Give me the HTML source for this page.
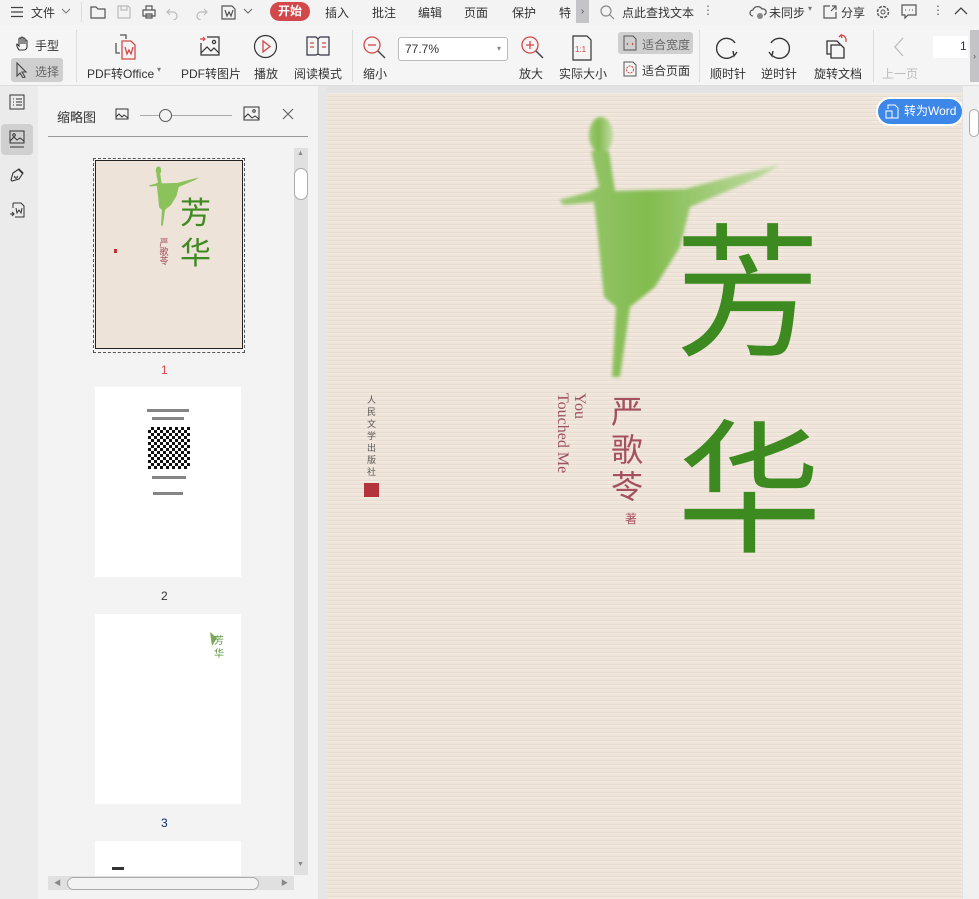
<!DOCTYPE html>
<html><head><meta charset="utf-8"><style>
*{margin:0;padding:0;box-sizing:border-box}
body{width:979px;height:899px;overflow:hidden;background:#e3e3e3;font-family:"Liberation Sans","Noto Sans CJK SC",sans-serif;font-size:12px;color:#333;position:relative}
.a{position:absolute}
#top{left:0;top:0;width:979px;height:25px;background:#f3f3f3}
#tb{left:0;top:25px;width:979px;height:61px;background:#f5f5f5;border-bottom:1px solid #ddd}
.t{position:absolute;white-space:nowrap;font-size:12px;color:#333}
.sep{position:absolute;width:1px;background:#dcdcdc}
#strip{left:0;top:86px;width:38px;height:813px;background:#ebebeb}
#panel{left:38px;top:86px;width:280px;height:813px;background:#f3f3f3}
#gap{left:318px;top:86px;width:9px;height:813px;background:#e6e6e6}
#page{left:327px;top:93px;width:635px;height:806px;background:#efe4d9;overflow:hidden;
background-image:repeating-linear-gradient(180deg,rgba(255,255,255,.25) 0 1px,rgba(0,0,0,0) 1px 3px,rgba(180,160,140,.12) 3px 4px)}
#rs{left:963px;top:86px;width:16px;height:813px;background:#f0f0f0}
</style></head><body>
<div id="top" class="a">
 <svg class="a" style="left:10px;top:6px" width="14" height="12"><path d="M1 1.5h12M1 6h12M1 10.5h12" stroke="#444" stroke-width="1.3"/></svg>
 <span class="t" style="left:31px;top:4px">文件</span>
 <svg class="a" style="left:61px;top:8px" width="10" height="7"><path d="M1 1l4 4 4-4" stroke="#777" fill="none"/></svg>
 <div class="sep" style="left:81px;top:2px;height:20px"></div>
 <svg class="a" style="left:90px;top:4px" width="160" height="16" fill="none" stroke="#555" stroke-width="1.2">
  <path d="M1 3h5l2 2h7v9H1z"/><path d="M28 2h10l2 2v10H28zM31 2v4h6V2" stroke="#bbb"/>
  <path d="M53 6h12v6H53zM56 6V2h6v4M56 10h6v4h-6z"/><path d="M80 5l-3 3 3 3M77 8h6a4 4 0 010 8" stroke="#bbb"/>
  <path d="M114 5l3 3-3 3M117 8h-6a4 4 0 000 8" stroke="#bbb"/><path d="M132 2h10l3 3v10h-13zM135 6l2 6 2-4 2 4 2-6"/>
 </svg>
 <svg class="a" style="left:243px;top:8px" width="10" height="7"><path d="M1 1l4 4 4-4" stroke="#666" fill="none"/></svg>
 <div class="a" style="left:270px;top:2px;width:40px;height:19px;background:#d2484a;border-radius:10px;color:#fff;font-size:12px;text-align:center;line-height:19px;font-weight:bold">开始</div>
 <span class="t" style="left:325px;top:4px">插入</span><span class="t" style="left:372px;top:4px">批注</span>
 <span class="t" style="left:418px;top:4px">编辑</span><span class="t" style="left:464px;top:4px">页面</span>
 <span class="t" style="left:512px;top:4px">保护</span><span class="t" style="left:559px;top:4px">特</span>
 <div class="a" style="left:576px;top:0;width:13px;height:23px;background:#c4c4c8;color:#555;font-size:10px;text-align:center;line-height:23px">›</div>
 <svg class="a" style="left:600px;top:5px" width="15" height="15"><circle cx="6" cy="6" r="5" stroke="#888" fill="none" stroke-width="1.2"/><path d="M10 10l4 4" stroke="#888" stroke-width="1.2"/></svg>
 <span class="t" style="left:622px;top:4px">点此查找文本</span><span class="t" style="left:702px;top:3px;color:#666">⋮</span>
 <svg class="a" style="left:749px;top:4px" width="18" height="16"><path d="M4 12a3 3 0 010-6 5 5 0 019-1 3 3 0 012 6" stroke="#555" fill="none" stroke-width="1.2"/><circle cx="11" cy="12" r="3" fill="#888"/></svg>
 <span class="t" style="left:769px;top:4px">未同步</span><span class="t" style="left:808px;top:4px;font-size:8px;color:#777">▾</span>
 <svg class="a" style="left:822px;top:4px" width="16" height="16"><path d="M8 2H2v12h12V8M9 7l5-5M10 2h4v4" stroke="#555" fill="none" stroke-width="1.2"/></svg>
 <span class="t" style="left:841px;top:4px">分享</span>
 <svg class="a" style="left:875px;top:4px" width="16" height="16"><circle cx="8" cy="8" r="5.5" stroke="#555" fill="none" stroke-width="1.5" stroke-dasharray="3 1.3"/><circle cx="8" cy="8" r="2" stroke="#555" fill="none"/></svg>
 <svg class="a" style="left:901px;top:4px" width="16" height="15"><path d="M1 1h14v10H7l-3 3v-3H1z" stroke="#555" fill="none" stroke-width="1.2"/><path d="M4 6h1M8 6h1M11 6h1" stroke="#555"/></svg>
 <span class="t" style="left:932px;top:3px;color:#555">⋮</span>
 <svg class="a" style="left:954px;top:7px" width="14" height="8"><path d="M1 7l6-6 6 6" stroke="#444" fill="none" stroke-width="1.3"/></svg>
</div>
<div id="tb" class="a">
 <svg class="a" style="left:15px;top:11px" width="16" height="16"><path d="M4 14c-2-3-3-5-2-6l2 2V3a1 1 0 012 0V8V2a1 1 0 012 0v6V3a1 1 0 012 0v5V5a1 1 0 012 0v6c0 2-2 3-3 3z" stroke="#333" fill="none" stroke-width="1.1"/></svg>
 <span class="t" style="left:35px;top:12px">手型</span>
 <div class="a" style="left:11px;top:33px;width:52px;height:24px;background:#cfcfcf;border-radius:3px"></div>
 <svg class="a" style="left:16px;top:37px" width="12" height="16"><path d="M1 1v13l3-3 3 5 2-1-3-5h4z" stroke="#444" fill="none" stroke-width="1.1"/></svg>
 <span class="t" style="left:35px;top:38px;color:#666">选择</span>
 <div class="sep" style="left:76px;top:5px;height:52px"></div>
 <svg class="a" style="left:112px;top:8px" width="26" height="28" fill="none" stroke-width="1.3"><path d="M8 2h6v4" stroke="#555"/><path d="M4 10v10h4" stroke="#555"/><path d="M10 8h9l4 4v14H10z" stroke="#d2484a"/><path d="M13 14l2 7 2-4 2 4 2-7" stroke="#d2484a"/></svg>
 <span class="t" style="left:87px;top:40px">PDF转Office</span><span class="t" style="left:157px;top:40px;font-size:8px;color:#777">▾</span>
 <svg class="a" style="left:198px;top:9px" width="24" height="24" fill="none" stroke="#333" stroke-width="1.2"><path d="M2 5h5M5 3l2 2-2 2" stroke="#d2484a"/><path d="M9 3h12v18H3V9"/><path d="M3 19l6-6 4 4 3-3 5 5"/><circle cx="16" cy="8" r="1.6"/></svg>
 <span class="t" style="left:181px;top:40px">PDF转图片</span>
 <svg class="a" style="left:253px;top:9px" width="25" height="25"><circle cx="12.5" cy="12.5" r="11" stroke="#333" fill="none" stroke-width="1.2"/><path d="M10 7l7 5.5-7 5.5z" stroke="#d2484a" fill="none" stroke-width="1.3"/></svg>
 <span class="t" style="left:254px;top:40px">播放</span>
 <svg class="a" style="left:306px;top:11px" width="24" height="20" fill="none" stroke="#334" stroke-width="1.2"><path d="M1 1h9l2 2 2-2h9v18h-9l-2-1-2 1H1zM12 3v15"/><path d="M4 7h4M4 11h4M16 7h4M16 11h4" stroke="#d2484a"/></svg>
 <span class="t" style="left:294px;top:40px">阅读模式</span>
 <div class="sep" style="left:352px;top:5px;height:52px"></div>
 <svg class="a" style="left:362px;top:10px" width="26" height="26"><circle cx="10" cy="10" r="8" stroke="#d2484a" fill="none" stroke-width="1.3"/><path d="M6 10h8" stroke="#d2484a" stroke-width="1.3"/><path d="M16 16l7 7" stroke="#444" stroke-width="1.5"/></svg>
 <span class="t" style="left:363px;top:40px">缩小</span>
 <div class="a" style="left:398px;top:12px;width:110px;height:24px;background:#fff;border:1px solid #bbb;border-radius:3px"></div>
 <span class="t" style="left:405px;top:17px">77.7%</span><span class="t" style="left:497px;top:19px;font-size:8px;color:#888">▾</span>
 <svg class="a" style="left:520px;top:10px" width="26" height="26"><circle cx="10" cy="10" r="8" stroke="#d2484a" fill="none" stroke-width="1.3"/><path d="M6 10h8M10 6v8" stroke="#d2484a" stroke-width="1.3"/><path d="M16 16l7 7" stroke="#444" stroke-width="1.5"/></svg>
 <span class="t" style="left:519px;top:40px">放大</span>
 <svg class="a" style="left:572px;top:10px" width="20" height="26"><path d="M1 1h14l4 4v20H1z" stroke="#333" fill="none" stroke-width="1.2"/><text x="3" y="17" font-size="8" fill="#d2484a" font-family="Liberation Sans">1:1</text></svg>
 <span class="t" style="left:559px;top:40px">实际大小</span>
 <div class="a" style="left:618px;top:7px;width:75px;height:22px;background:#cfcfcf;border-radius:3px"></div>
 <svg class="a" style="left:623px;top:10px" width="14" height="16"><path d="M1 1h9l3 3v11H1z" stroke="#555" fill="none"/><path d="M5 8l-1 1 1 1M9 8l1 1-1 1" stroke="#d2484a" fill="none"/></svg>
 <span class="t" style="left:642px;top:11px;color:#666">适合宽度</span>
 <svg class="a" style="left:623px;top:36px" width="14" height="16"><path d="M1 1h9l3 3v11H1z" stroke="#555" fill="none"/><circle cx="7" cy="8.5" r="3.5" stroke="#d2484a" fill="none" stroke-dasharray="2 1"/></svg>
 <span class="t" style="left:642px;top:37px">适合页面</span>
 <div class="sep" style="left:699px;top:5px;height:52px"></div>
 <svg class="a" style="left:716px;top:10px" width="24" height="24"><path d="M17 21A10 10 0 1119 8" stroke="#333" fill="none" stroke-width="1.4"/><path d="M21 17l-3 4-1-5" stroke="#333" fill="none" stroke-width="1.4"/></svg>
 <span class="t" style="left:710px;top:40px">顺时针</span>
 <svg class="a" style="left:766px;top:10px" width="24" height="24"><path d="M7 21A10 10 0 105 8" stroke="#333" fill="none" stroke-width="1.4"/><path d="M3 17l3 4 1-5" stroke="#333" fill="none" stroke-width="1.4"/></svg>
 <span class="t" style="left:761px;top:40px">逆时针</span>
 <svg class="a" style="left:824px;top:8px" width="26" height="26" fill="none" stroke-width="1.3"><path d="M3 8h10l3 3v10H3z" stroke="#333"/><path d="M7 12h10l3 3v10H7z" stroke="#333" fill="#f5f5f5"/><path d="M17 2a5 5 0 015 5M15 4l2-2 1 3M22 9l0-2" stroke="#d2484a"/></svg>
 <span class="t" style="left:814px;top:40px">旋转文档</span>
 <div class="sep" style="left:873px;top:5px;height:52px"></div>
 <svg class="a" style="left:893px;top:12px" width="12" height="20"><path d="M10 1L2 10l8 9" stroke="#bbb" fill="none" stroke-width="1.3"/></svg>
 <span class="t" style="left:882px;top:40px;color:#bbb">上一页</span>
 <div class="a" style="left:933px;top:11px;width:35px;height:22px;background:#fff"></div>
 <span class="t" style="left:960px;top:14px">1</span>
 <div class="a" style="left:970px;top:5px;width:9px;height:52px;background:#c4c4c8;color:#555;font-size:9px;line-height:52px;text-align:center">›</div>
</div>
<div id="strip" class="a">
 <svg class="a" style="left:9px;top:8px" width="16" height="16"><rect x="1" y="1" width="14" height="14" stroke="#333" fill="none"/><path d="M4 5h1M7 5h6M4 8h1M7 8h6M4 11h1M7 11h6" stroke="#333"/></svg>
 <div class="a" style="left:1px;top:38px;width:32px;height:31px;background:#d0d0d0;border-radius:4px"></div>
 <svg class="a" style="left:9px;top:44px" width="16" height="19"><rect x="1" y="1" width="14" height="12" stroke="#333" fill="none"/><path d="M1 11l4-4 3 3 3-2 4 3M1 17h14" stroke="#333" fill="none"/><circle cx="5" cy="5" r="1.3" stroke="#333" fill="none"/></svg>
 <svg class="a" style="left:9px;top:81px" width="16" height="16"><path d="M2 13l2-7 6-4 4 4-4 6-7 2zM6 9a1.3 1.3 0 102 0M9 2l5 5" stroke="#333" fill="none" stroke-width="1.1"/></svg>
 <svg class="a" style="left:9px;top:116px" width="16" height="16"><path d="M4 1h8l3 3v11H6M4 6V1" stroke="#333" fill="none"/><path d="M7 6l1 5 2-3 2 3 1-5M1 12h4M3 10l2 2-2 2" stroke="#333" fill="none"/></svg>
</div>
<div id="panel" class="a">
 <span class="t" style="left:19px;top:21px;font-size:13px">缩略图</span>
 <svg class="a" style="left:77px;top:22px" width="15" height="13"><rect x="1" y="1" width="12" height="10" stroke="#333" fill="none"/><path d="M1 9l3-3 3 3 2-2 4 3" stroke="#333" fill="none"/></svg>
 <div class="a" style="left:102px;top:29px;width:92px;height:1px;background:#aaa"></div>
 <div class="a" style="left:121px;top:23px;width:13px;height:13px;border:1.3px solid #555;border-radius:50%;background:#f3f3f3"></div>
 <svg class="a" style="left:205px;top:20px" width="17" height="16"><rect x="1" y="1" width="15" height="13" stroke="#333" fill="none"/><path d="M1 12l4-4 4 4 3-2 4 3" stroke="#333" fill="none"/><circle cx="11" cy="5" r="1.3" stroke="#333" fill="none"/></svg>
 <svg class="a" style="left:244px;top:22px" width="12" height="12"><path d="M1 1l10 10M11 1L1 11" stroke="#666" stroke-width="1.2"/></svg>
 <div class="a" style="left:10px;top:50px;width:260px;height:1px;background:#999"></div>
 <div class="a" style="left:256px;top:62px;width:14px;height:727px;background:#e0e0e0"></div>
 <div class="a" style="left:256px;top:82px;width:14px;height:32px;background:#fff;border:1px solid #aaa;border-radius:7px"></div>
 <span class="t" style="left:259px;top:64px;font-size:7px;color:#888">▲</span>
 <span class="t" style="left:259px;top:775px;font-size:7px;color:#888">▼</span>
 <div class="a" style="left:10px;top:790px;width:246px;height:14px;background:#e0e0e0"></div>
 <div class="a" style="left:29px;top:791px;width:192px;height:13px;background:#f3f3f3;border:1px solid #aaa;border-radius:7px"></div>
 <span class="t" style="left:16px;top:792px;font-size:7px;color:#888">◀</span><span class="t" style="left:243px;top:792px;font-size:7px;color:#888">▶</span>
 <div class="a" style="left:55px;top:72px;width:152px;height:195px;border:1px dashed #555"></div>
 <div class="a" style="left:57px;top:74px;width:148px;height:189px;background:#ede3d8;border:1.5px solid #222;overflow:hidden">
  <svg width="148" height="189">
   <g transform="scale(0.228)" fill="#8cc25c">
    <ellipse cx="274" cy="42" rx="12" ry="18"/>
    <path d="M264 58h18l6 40 70-2 60-16 35-8-20 12-70 30-10 40-25 40-25 20-10 70h-8l4-70-12-10-6-60-4-35-30 3-5-5 30-8 10-5z"/>
   </g>
   <text x="84" y="63" font-size="31" fill="#3f8a22" font-family="Noto Sans CJK SC,sans-serif">芳</text><text x="84" y="103" font-size="31" fill="#3f8a22" font-family="Noto Sans CJK SC,sans-serif">华</text>
   <text x="68" y="77" font-size="9" fill="#a14a5a" font-family="Noto Sans CJK SC,sans-serif" writing-mode="tb">严歌苓</text>
   <rect x="18" y="88" width="3" height="4" fill="#b33"/></svg>
 </div>
 <span class="t" style="left:123px;top:277px;color:#d2484a">1</span>
 <div class="a" style="left:57px;top:301px;width:146px;height:190px;background:#fff">
  <div class="a" style="left:52px;top:22px;width:42px;height:3px;background:#333;opacity:.6"></div>
  <div class="a" style="left:57px;top:30px;width:32px;height:3px;background:#333;opacity:.6"></div>
  <div class="a" style="left:53px;top:40px;width:42px;height:42px;background:repeating-conic-gradient(#111 0 25%,#fff 0 50%) 0 0/6px 6px"></div>
  <div class="a" style="left:57px;top:89px;width:34px;height:3px;background:#333;opacity:.6"></div>
  <div class="a" style="left:58px;top:105px;width:30px;height:3px;background:#333;opacity:.6"></div>
 </div>
 <span class="t" style="left:123px;top:503px">2</span>
 <div class="a" style="left:57px;top:528px;width:146px;height:190px;background:#fff">
  <svg class="a" style="left:112px;top:16px" width="20" height="30"><path d="M3 2l7 6-5 8z" fill="#7aa85a"/><text x="7" y="14" font-size="10" fill="#5a9a3a">芳</text><text x="7" y="27" font-size="10" fill="#5a9a3a">华</text></svg>
 </div>
 <span class="t" style="left:123px;top:730px;color:#0a2a66">3</span>
 <div class="a" style="left:57px;top:755px;width:146px;height:35px;background:#fff"><div class="a" style="left:17px;top:26px;width:12px;height:3px;background:#333"></div></div>
</div>
<div id="gap" class="a"></div>
<div id="rs" class="a"><div class="a" style="left:6px;top:23px;width:10px;height:28px;border:1px solid #aaa;border-radius:5px;background:#fff"></div></div>
<div id="page" class="a">
 <svg width="635" height="806" style="position:absolute;left:0;top:0">
  <defs><filter id="b"><feGaussianBlur stdDeviation="1.5"/></filter>
   <linearGradient id="g" x1="0" y1="0" x2="1" y2="0"><stop offset="0" stop-color="#9cc874"/><stop offset=".4" stop-color="#82bc4e"/><stop offset="1" stop-color="#c4dca8"/></linearGradient></defs>
  <g filter="url(#b)" fill="url(#g)">
   <ellipse cx="274" cy="42" rx="12" ry="18"/>
   <path d="M264 58h18l6 40 70-2 60-16 35-8-20 12-70 30-10 40-25 40-25 20-10 70h-8l4-70-12-10-6-60-4-35-30 3-5-5 30-8 10-5z"/>
  </g>
  <g fill="#3c8a20" font-family="Noto Sans CJK SC,sans-serif" font-weight="400">
   <text x="348" y="252" font-size="145">芳</text>
   <text x="350" y="448" font-size="145">华</text>
  </g>
  <g font-family="Noto Sans CJK SC,sans-serif" fill="#a4505e">
   <text x="284" y="330" font-size="32">严</text>
   <text x="284" y="368" font-size="32">歌</text>
   <text x="284" y="405" font-size="32">苓</text>
   <text x="298" y="430" font-size="12">著</text>
   <text x="248" y="300" font-size="16" transform="rotate(90 248 300)" font-family="Liberation Serif,serif" fill="#9a5060">You</text>
   <text x="231" y="300" font-size="16" transform="rotate(90 231 300)" font-family="Liberation Serif,serif" fill="#9a5060">Touched Me</text>
  </g>
  <g fill="#555" font-size="9" font-family="Noto Sans CJK SC,sans-serif"><text x="40" y="310">人</text><text x="40" y="322">民</text><text x="40" y="334">文</text><text x="40" y="346">学</text><text x="40" y="358">出</text><text x="40" y="370">版</text><text x="40" y="382">社</text></g>
  <rect x="37" y="390" width="15" height="14" fill="#b3343a"/>
 </svg>
 <div class="a" style="left:549px;top:4px;width:88px;height:29px;background:#3d87e8;border-radius:15px;border:2px solid #fff;color:#fff;font-size:12px;line-height:25px;padding-left:26px">转为Word</div>
 <svg class="a" style="left:558px;top:11px" width="14" height="15"><path d="M3 5V1h7l3 3v10H6" stroke="#fff" fill="none"/><path d="M1 7h6v7H1z" stroke="#fff" fill="none"/></svg>
</div>
</body></html>
